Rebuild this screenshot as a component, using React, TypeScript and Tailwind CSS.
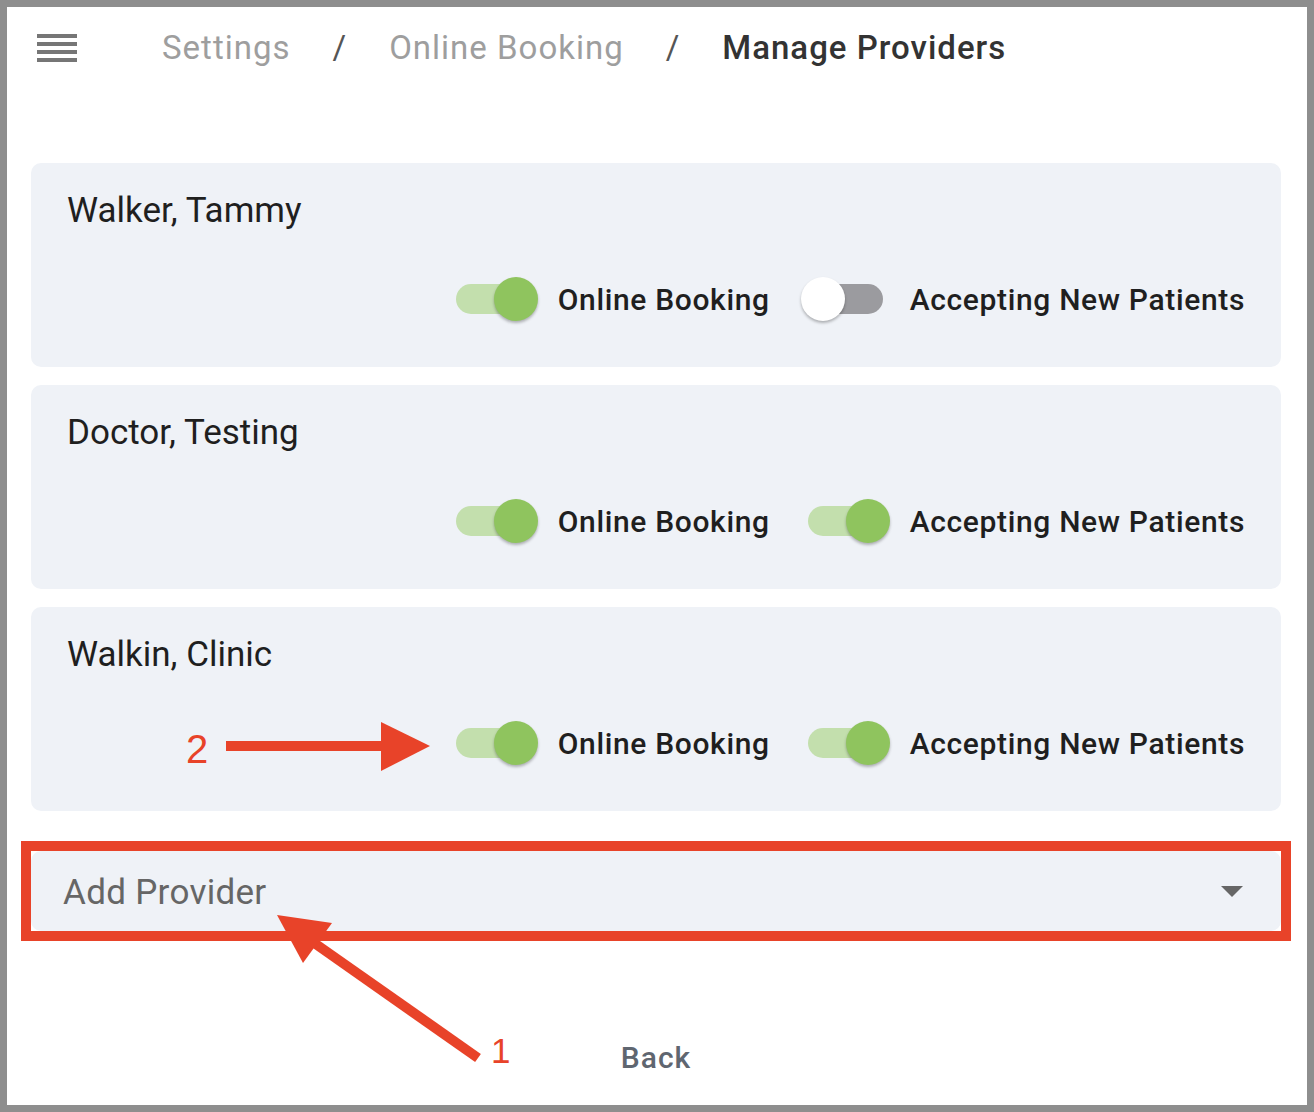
import React from "react";

type Provider = { name: string; online: boolean; accepting: boolean };

const providers: Provider[] = [
  { name: "Walker, Tammy", online: true, accepting: false },
  { name: "Doctor, Testing", online: true, accepting: true },
  { name: "Walkin, Clinic", online: true, accepting: true },
];

const Switch = ({ on }: { on: boolean }) => (
  <div className="relative w-[75px] h-[44px] shrink-0">
    <div
      className={`absolute left-0 top-[7px] w-[75px] h-[30px] rounded-full ${
        on ? "bg-[#c3dfad]" : "bg-[#9b9b9f]"
      }`}
    />
    <div
      className={`absolute top-0 w-[44px] h-[44px] rounded-full shadow-[0_2px_3px_rgba(0,0,0,0.28)] ${
        on ? "left-[38px] bg-[#8fc45e]" : "left-[-7px] bg-white"
      }`}
    />
  </div>
);

const ProviderCard = ({ p }: { p: Provider }) => (
  <div className="bg-[#eff2f7] rounded-[10px] pl-[36px] pr-[36px] pt-[29px] pb-[46px]">
    <div className="h-[38px] leading-[38px] text-[35px] text-[#1f1f1f]">{p.name}</div>
    <div className="mt-[47px] flex items-center justify-end h-[44px]">
      <Switch on={p.online} />
      <span className="ml-[27px] text-[30px] font-medium text-[#1f1f1f] tracking-[0.65px]">Online Booking</span>
      <div className="ml-[38px]">
        <Switch on={p.accepting} />
      </div>
      <span className="ml-[27px] text-[30px] font-medium text-[#1f1f1f] tracking-[0.65px]">Accepting New Patients</span>
    </div>
  </div>
);

export default function App() {
  return (
    <div
      className="relative w-[1314px] h-[1112px] border-[7px] border-[#8e8e8e] bg-white overflow-hidden"
      style={{ fontFamily: "Roboto, 'Noto Sans', sans-serif" }}
    >
      <header className="h-[82px] flex items-center pl-[30px]">
        <div className="flex flex-col gap-[4px] w-[40px]">
          <div className="h-[4px] bg-[#767676]" />
          <div className="h-[4px] bg-[#767676]" />
          <div className="h-[4px] bg-[#767676]" />
          <div className="h-[4px] bg-[#767676]" />
        </div>
        <nav className="ml-[85px] flex items-center text-[33px] tracking-[1px]">
          <span className="text-[#9e9e9e]">Settings</span>
          <span className="mx-[42px] text-[#555]">/</span>
          <span className="text-[#9e9e9e]">Online Booking</span>
          <span className="mx-[42px] text-[#555]">/</span>
          <span className="font-medium text-[#333]">Manage Providers</span>
        </nav>
      </header>

      <main className="pl-[24px] pr-[26px] mt-[74px]">
        <div className="flex flex-col gap-[18px]">
          {providers.map((p, i) => (
            <ProviderCard key={i} p={p} />
          ))}
        </div>

        <div className="mt-[30px] -mx-[10px] border-[10px] border-[#e84329]">
          <div className="h-[80px] bg-[#eff2f7] rounded-[10px] flex items-center justify-between pl-[32px] pr-[38px]">
            <span className="text-[35px] text-[#666] tracking-[0.3px] pt-[4px]">Add Provider</span>
            <svg width="22" height="11" viewBox="0 0 22 11">
              <path d="M0 0 L22 0 L11 11 Z" fill="#666" />
            </svg>
          </div>
        </div>

        <div className="mt-[99px] flex justify-center">
          <span className="text-[30px] font-medium text-[#5f6670] tracking-[1px] leading-[36px]">Back</span>
        </div>
      </main>

      <svg
        className="absolute left-[-7px] top-[-7px] pointer-events-none"
        width="1314"
        height="1112"
        viewBox="0 0 1314 1112"
      >
        <line x1="226" y1="746" x2="384" y2="746" stroke="#e84329" strokeWidth="10" />
        <polygon points="381,722 430,746 381,771" fill="#e84329" />
        <text x="186" y="763" fontSize="40" fill="#e84329" fontFamily="'Liberation Sans', Arial, sans-serif">2</text>

        <line x1="478" y1="1058" x2="310" y2="940" stroke="#e84329" strokeWidth="10" />
        <polygon points="277,915 332,923 303,963" fill="#e84329" />
        <text x="491" y="1063" fontSize="35" fill="#e84329" fontFamily="'Liberation Sans', Arial, sans-serif">1</text>
      </svg>
    </div>
  );
}
